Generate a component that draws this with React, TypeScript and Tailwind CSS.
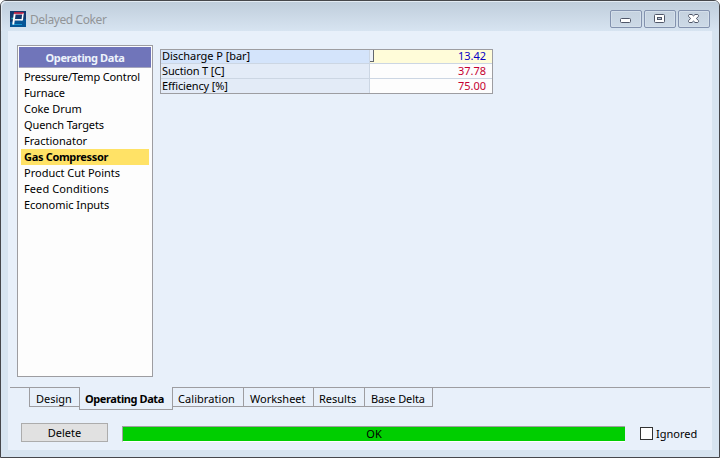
import React from "react";

const items: [string, string][] = [
  ["Pressure/Temp Control", "tracking-[-0.13px]"],
  ["Furnace", "tracking-[-0.1px]"],
  ["Coke Drum", "tracking-[-0.05px]"],
  ["Quench Targets", "tracking-[-0.1px]"],
  ["Fractionator", "tracking-[0px]"],
  ["Gas Compressor", "tracking-[-0.32px]"],
  ["Product Cut Points", "tracking-[0px]"],
  ["Feed Conditions", "tracking-[0.1px]"],
  ["Economic Inputs", "tracking-[-0.06px]"],
];

const tabs: [string, string][] = [
  ["Calibration", "w-[72px] pl-[6px] tracking-[0.06px]"],
  ["Worksheet", "w-[70px] pl-[6px]"],
  ["Results", "w-[51px] pl-[5px]"],
  ["Base Delta", "w-[68px] pl-[6px] tracking-[-0.1px]"],
];

function AppIcon() {
  return (
    <svg width="16" height="16" viewBox="0 0 16 16" className="mt-px">
      <rect width="16" height="16" fill="#12396f" />
      <path d="M0 11L16 8V16H0Z" fill="#075596" />
      <path d="M1.5 7.5H4" stroke="#28b4b9" strokeWidth="1.5" />
      <path d="M2 13.5H12" stroke="#1596cf" />
      <path d="M4.7 3L3.2 13.5" stroke="#fff" strokeWidth="1.9" fill="none" />
      <path d="M4.5 8.8H12" stroke="#fff" strokeWidth="1.5" fill="none" />
      <path d="M13 2L12.2 9.5" stroke="#fff" strokeWidth="1.5" fill="none" />
      <path d="M4 3.1H13.5" stroke="#f4d3dc" strokeWidth="1" fill="none" />
      <path d="M4 2H13.6" stroke="#e51c38" strokeWidth="1.4" fill="none" />
    </svg>
  );
}

function CaptionButton({ children }: { children: React.ReactNode }) {
  return (
    <div className="flex h-[18px] w-8 items-center justify-center rounded-[2px] border border-[#8392ae] bg-gradient-to-b from-[#c5d2df] to-[#cddae7] shadow-[inset_0_0_0_1px_#d4dfea]">
      {children}
    </div>
  );
}

export default function App() {
  return (
    <div className="h-[458px] w-[720px] bg-white font-['Noto_Sans','Open_Sans',sans-serif] text-[11px] leading-4 text-black">
      <div className="flex h-[458px] w-[720px] flex-col rounded-t-[6px] border border-[#46474b] bg-[#d7e4f0] px-[7px]">
        <header className="-mx-[7px] flex h-[30px] shrink-0 rounded-t-[5px] bg-gradient-to-b from-[#bfcddb] to-[#d7e4f1] pt-[9px] pl-[9px] pr-[9px] shadow-[inset_1px_1px_0_#e3ebf3]">
          <AppIcon />
          <span className="ml-1 grow text-xs leading-[19px] tracking-[-0.4px] text-[#929598]">Delayed Coker</span>
          <div className="flex gap-[2px]">
            <CaptionButton>
              <svg width="12" height="10"><rect x=".5" y="4.5" width="10" height="4" rx="1" fill="#fff" stroke="#4f5668" /></svg>
            </CaptionButton>
            <CaptionButton>
              <svg width="12" height="10"><rect x=".5" y=".5" width="10" height="8" rx="1" fill="#fff" stroke="#4f5668" /><rect x="3.5" y="3.5" width="4" height="2" fill="#b8c6d6" stroke="#4f5668" /></svg>
            </CaptionButton>
            <CaptionButton>
              <svg width="12" height="10" viewBox="0 0 12 10"><path d="M1.2 .5H4L5.5 1.9L7 .5H9.8L10.5 1.4V2.4L8.3 4.5L10.5 6.6V7.6L9.8 8.5H7L5.5 7.1L4 8.5H1.2L.5 7.6V6.6L2.7 4.5L.5 2.4V1.4Z" fill="#fff" stroke="#4f5668" strokeLinejoin="round" /></svg>
            </CaptionButton>
          </div>
        </header>

        <main className="flex h-[419px] w-[704px] flex-col bg-[#e8f0fa]">
          <div className="flex h-[356px] gap-[7px] pl-[9px] pt-[14px]">
            <aside className="h-[332px] w-[136px] border border-[#9d9da1] bg-[#fdfdfd] p-px">
              <div className="h-[21px] border-b border-[#a5a6bd] bg-[#7075ba] pt-[3px] text-center font-bold tracking-[-0.4px] text-[#edf3fc]">Operating Data</div>
              <div className="px-[2px] pt-px">
                {items.map(([name, tracking]) => (
                  <div key={name} className={`h-4 whitespace-nowrap pl-[3px] ${tracking} ${name === "Gas Compressor" ? "bg-[#ffe266] font-bold" : ""}`}>{name}</div>
                ))}
              </div>
            </aside>
            <div className="mt-[4px] grid h-[45px] w-[333px] grid-cols-[209px_122px] grid-rows-[14px_15px_14px] border border-[#9d9da1] leading-[14px]">
              <div className="border-b border-r border-[#ccd6e3] bg-[#d4e4fb] pl-px leading-[12px] tracking-[-0.04px]">Discharge P [bar]</div>
              <div className="flex border-b border-[#ccd6e3] bg-[#fffcd9] pr-[6px] leading-[12px] text-[#0800c4]">
                <span className="h-3 w-1 border-b border-r border-[#62666e] bg-[#edf2fa]" />
                <span className="grow text-right">13.42</span>
              </div>
              <div className="border-b border-r border-[#ccd6e3] bg-[#e3ebf7] pl-px tracking-[-0.15px]">Suction T [C]</div>
              <div className="border-b border-[#ccd6e3] bg-[#fdfdfd] pr-[6px] text-right text-[#c50031]">37.78</div>
              <div className="border-r border-[#ccd6e3] bg-[#e3ebf7] pl-px tracking-[-0.15px]">Efficiency [%]</div>
              <div className="bg-[#fdfdfd] pr-[6px] text-right text-[#c50031]">75.00</div>
            </div>
          </div>

          <nav className="flex h-9 items-start pl-[2px] pr-[2px] leading-[22px]">
            <div className="h-px w-[19px] bg-[#9d9da1]" />
            <div className="h-5 w-[50px] border-y border-l border-[#9d9da1] pl-[6px]">Design</div>
            <div className="h-[23px] w-[94px] whitespace-nowrap border-x border-b border-[#9d9da1] pl-[5px] pt-px font-bold tracking-[-0.4px]">Operating Data</div>
            <div className="-ml-px flex">
              {tabs.map(([name, size]) => (
                <div key={name} className={`h-5 whitespace-nowrap border-y border-r border-[#9d9da1] ${size}`}>{name}</div>
              ))}
            </div>
            <div className="h-px grow bg-[#9d9da1]" />
          </nav>

          <footer className="flex items-start pl-[13px]">
            <button className="h-[19px] w-[87px] border border-[#acacac] bg-[#e1e1e1] leading-[17px]">Delete</button>
            <div className="ml-[14px] mt-[3px] h-4 w-[503px] border-b border-l border-t border-b-white border-l-[#a0a0a0] border-t-[#a0a0a0] bg-[#00ce00] text-center leading-[14px]">OK</div>
            <label className="ml-[15px] mt-1 flex h-[13px] items-center gap-[3px]">
              <span className="h-[13px] w-[13px] border border-[#333] bg-white" />
              Ignored
            </label>
          </footer>
        </main>
      </div>
    </div>
  );
}
